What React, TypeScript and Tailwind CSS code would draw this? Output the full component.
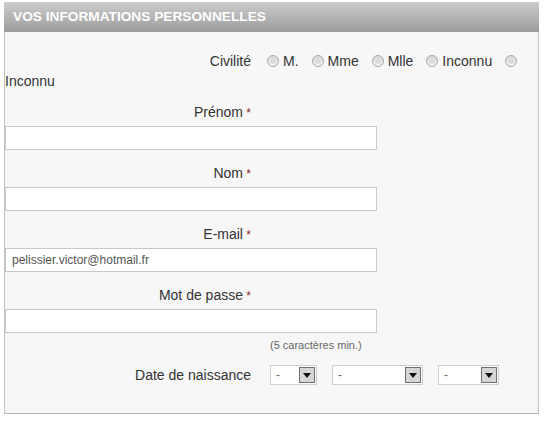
import { ReactNode } from 'react';

function Star() {
  return <span className="text-[12px] text-[#8e2b2b]"> *</span>;
}

function Label({ children }: { children: ReactNode }) {
  return <div className="w-[246px] h-[20px] leading-[20px] text-right text-[14px] text-[#333]">{children}</div>;
}

function TextInput({ value }: { value?: string }) {
  return (
    <div className="mt-[4px] w-[372px] h-[24px] bg-white border border-[#c9c9c9] px-[6px] text-[12px] leading-[22px] text-[#555]">
      {value}
    </div>
  );
}

function Radio({ label }: { label?: string }) {
  return (
    <span className="flex items-center gap-[4px] mr-[13px]">
      <span className="w-[12px] h-[12px] rounded-full border border-[#a8a8a8] bg-gradient-to-b from-[#d8d8d8] to-[#f4f4f4] flex items-center justify-center">
        <span className="w-[6px] h-[6px] rounded-full bg-[#dcdcdc]" />
      </span>
      {label && <span>{label}</span>}
    </span>
  );
}

function FakeSelect({ width }: { width: string }) {
  return (
    <div className={`${width} h-[20px] bg-white border border-[#cfcfcf] flex items-center justify-between pl-[5px] pr-[1px]`}>
      <span className="text-[12px] text-[#666]">-</span>
      <span className="w-[16px] h-[16px] border border-[#6f6f6f] bg-[#d6d6d6] flex items-center justify-center">
        <svg width="8" height="5" viewBox="0 0 8 5">
          <path d="M0 0h8L4 5z" fill="#111" />
        </svg>
      </span>
    </div>
  );
}

export default function App() {
  return (
    <div className="w-[547px] h-[427px] bg-white pt-[2px] pl-[4px]" style={{ fontFamily: '"Liberation Sans", Arial, sans-serif' }}>
      <div className="w-[535px] border-l border-r border-b border-[#c4c4c4] border-b-[#b4b4b4] bg-[#f7f7f7]">
        <div className="h-[30px] -ml-[1px] -mr-[1px] bg-gradient-to-b from-[#cdcdcd] to-[#9c9c9c] pl-[9px] flex items-center">
          <span className="text-[13.7px] font-bold text-white">VOS INFORMATIONS PERSONNELLES</span>
        </div>
        <div className="pt-[19px] pb-[28px] text-[14px] text-[#333]">
          <div className="flex items-center h-[20px]">
            <div className="w-[246px] text-right">Civilité</div>
            <div className="flex items-center ml-[16px]">
              <Radio label="M." />
              <Radio label="Mme" />
              <Radio label="Mlle" />
              <Radio label="Inconnu" />
              <Radio />
            </div>
          </div>
          <div className="h-[20px] leading-[20px]">Inconnu</div>

          <div className="mt-[11px]">
            <Label>
              Prénom<Star />
            </Label>
            <TextInput />
          </div>
          <div className="mt-[13px]">
            <Label>
              Nom<Star />
            </Label>
            <TextInput />
          </div>
          <div className="mt-[13px]">
            <Label>
              E-mail<Star />
            </Label>
            <TextInput value="pelissier.victor@hotmail.fr" />
          </div>
          <div className="mt-[13px]">
            <Label>
              Mot de passe<Star />
            </Label>
            <TextInput />
          </div>
          <div className="mt-[4px] pl-[265px] h-[16px] leading-[16px] text-[11px] text-[#666]">(5 caractères min.)</div>

          <div className="mt-[12px] flex items-center h-[20px]">
            <div className="w-[246px] text-right">Date de naissance</div>
            <div className="flex items-center gap-[15px] ml-[19px]">
              <FakeSelect width="w-[47px]" />
              <FakeSelect width="w-[91px]" />
              <FakeSelect width="w-[61px]" />
            </div>
          </div>
        </div>
      </div>
    </div>
  );
}
